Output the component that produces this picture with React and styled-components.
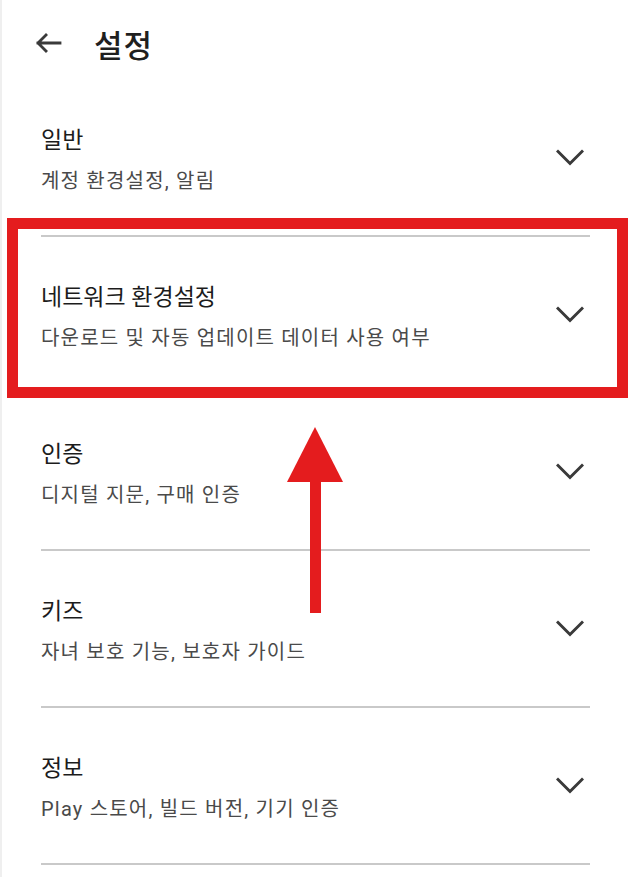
import styled, { createGlobalStyle } from "styled-components";

const GlobalStyle = createGlobalStyle`
  html, body {
    margin: 0;
    padding: 0;
    background: #ffffff;
  }
  body {
    font-family: Roboto, "Noto Sans CJK KR", sans-serif;
    color: #1f1f1f;
  }
`;

const sections = [
  { title: "일반", sub: "계정 환경설정, 알림" },
  { title: "네트워크 환경설정", sub: "다운로드 및 자동 업데이트 데이터 사용 여부" },
  { title: "인증", sub: "디지털 지문, 구매 인증" },
  { title: "키즈", sub: "자녀 보호 기능, 보호자 가이드" },
  { title: "정보", sub: "Play 스토어, 빌드 버전, 기기 인증" },
];

const BackArrow = () => (
  <svg width="27" height="20" viewBox="0 0 27 20" fill="none">
    <path
      d="M25 10H3M11 2L3 10l8 8"
      stroke="#3a3a3a"
      strokeWidth="2.8"
      strokeLinecap="square"
    />
  </svg>
);

const Chevron = () => (
  <svg width="28" height="17" viewBox="0 0 28 17" fill="none">
    <path
      d="M2 2.5l12 12 12-12"
      stroke="#3a3a3a"
      strokeWidth="3"
      strokeLinecap="square"
    />
  </svg>
);

const SettingsPage = () => {
  return (
    <Page>
      <Header>
        <IconButton>
          <BackArrow />
        </IconButton>
        <Title>설정</Title>
      </Header>

      <List>
        {sections.map((s) => (
          <Row key={s.title}>
            <TextBlock>
              <RowTitle>{s.title}</RowTitle>
              <RowSub>{s.sub}</RowSub>
            </TextBlock>
            <Chevron />
          </Row>
        ))}
      </List>

      <Highlight />
      <PointerArrow>
        <ArrowHead />
        <ArrowShaft />
      </PointerArrow>
    </Page>
  );
};

const Page = styled.div`
  position: relative;
  width: 629px;
  height: 877px;
  overflow: hidden;
  background: #fff;
  box-sizing: border-box;
  border-left: 2px solid #efefef;
`;

const Header = styled.header`
  display: flex;
  align-items: center;
  height: 80px;
  padding: 6px 0 0 33px;
  box-sizing: border-box;
`;

const IconButton = styled.div`
  display: flex;
  align-items: center;
  width: 59px;
`;

const Title = styled.h1`
  margin: 0;
  font-size: 31px;
  font-weight: 500;
  color: #1f1f1f;
  letter-spacing: 1px;
`;

const List = styled.div`
  display: flex;
  flex-direction: column;
  padding: 0 39px 0 39px;
`;

const Row = styled.div`
  display: flex;
  align-items: center;
  justify-content: space-between;
  height: 157px;
  box-sizing: border-box;
  border-bottom: 2px solid #c9c9c9;
  padding: 0 6px 0 0;
`;

const TextBlock = styled.div`
  display: flex;
  flex-direction: column;
  gap: 12px;
  padding-top: 4px;
`;

const RowTitle = styled.div`
  font-size: 23px;
  line-height: 30px;
  color: #1c1c1c;
`;

const RowSub = styled.div`
  font-size: 20px;
  line-height: 26px;
  letter-spacing: 1.2px;
  color: #4a4a4a;
`;

const Highlight = styled.div`
  position: absolute;
  left: 5px;
  top: 218px;
  width: 621px;
  height: 180px;
  box-sizing: border-box;
  border: 11px solid #e41c1e;
`;

const PointerArrow = styled.div`
  position: absolute;
  left: 285px;
  top: 427px;
  width: 56px;
  display: flex;
  flex-direction: column;
  align-items: center;
`;

const ArrowHead = styled.div`
  width: 0;
  height: 0;
  border-left: 28px solid transparent;
  border-right: 28px solid transparent;
  border-bottom: 55px solid #e41c1e;
`;

const ArrowShaft = styled.div`
  width: 11px;
  height: 131px;
  background: #e41c1e;
`;

export default function App() {
  return (
    <>
      <GlobalStyle />
      <SettingsPage />
    </>
  );
}
